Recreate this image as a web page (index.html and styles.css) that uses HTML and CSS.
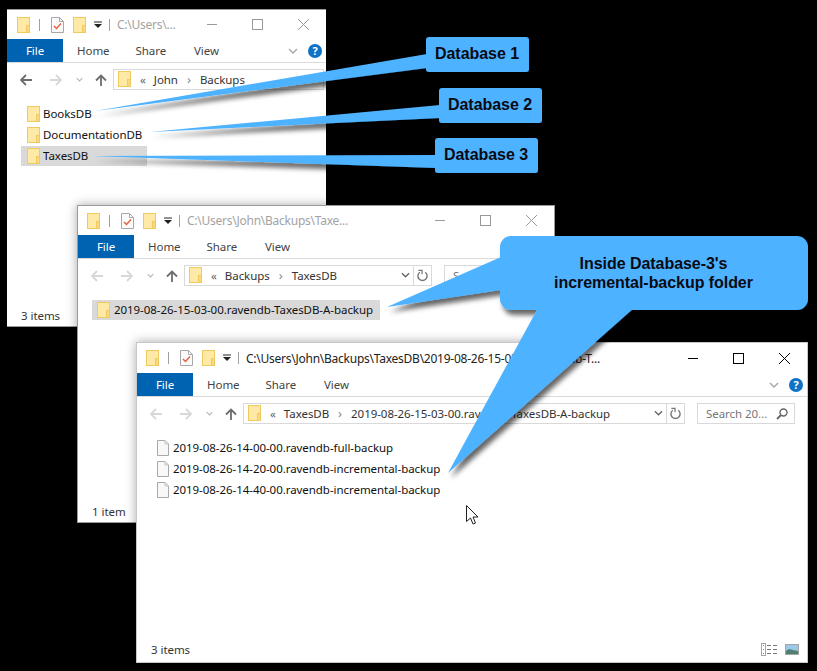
FILE: index.html
```html
<!DOCTYPE html>
<html lang="en">
<head>
    <meta charset="UTF-8">
    <title>RavenDB backup folders</title>
    <link rel="stylesheet" href="styles.css">
</head>
<body>
    <svg class="defs" width="0" height="0">
        <defs>
            <symbol id="folder" viewBox="0 0 13 16">
                <rect x="0.5" y="0.5" width="12" height="15" fill="#ffe9a6" stroke="#f0c95f"/>
                <rect x="9.5" y="8.5" width="3" height="7" fill="#f8d97f" stroke="#f0c95f"/>
            </symbol>
            <symbol id="check" viewBox="0 0 13 16">
                <path d="M.5.5h8l4 4v11H.5z" fill="#fafafa" stroke="#a8a8a8"/>
                <path d="M8.5.5v4h4" fill="none" stroke="#a8a8a8"/>
                <path d="M3 9l2.5 2.5L10 6.5" fill="none" stroke="#e2603a" stroke-width="1.4"/>
            </symbol>
            <symbol id="file" viewBox="0 0 12 16">
                <path d="M.5.5h7.500l3.500 3.500v11.500H.5z" fill="#f8f8f8" stroke="#a9a9a9"/>
                <path d="M8 .5v3.500h3.500" fill="none" stroke="#c4c4c4"/>
            </symbol>
            <symbol id="drop" viewBox="0 0 8 8">
                <path d="M0 1h8" stroke="#222" fill="none"/>
                <path d="M0 3h8L4 7z" fill="#222"/>
            </symbol>
            <symbol id="back" viewBox="0 0 12 12">
                <path d="M12 6H1.500M6 1L1 6l5 5" fill="none" stroke="currentColor" stroke-width="1.800"/>
            </symbol>
            <symbol id="forward" viewBox="0 0 12 12">
                <path d="M0 6h10.500M6 1l5 5-5 5" fill="none" stroke="currentColor" stroke-width="1.800"/>
            </symbol>
            <symbol id="up" viewBox="0 0 12 12">
                <path d="M6 12V1.500M1 6.500l5-5 5 5" fill="none" stroke="currentColor" stroke-width="1.800"/>
            </symbol>
            <symbol id="chev" viewBox="0 0 10 6">
                <path d="M1 1l4 4 4-4" fill="none" stroke="currentColor" stroke-width="1.500"/>
            </symbol>
            <symbol id="refresh" viewBox="0 0 12 14">
                <path d="M3 3.500a5 5 0 1 0 6 0" fill="none" stroke="#777" stroke-width="1.500"/>
                <path d="M1.500 1.500h4v4" fill="none" stroke="#777" stroke-width="1.300"/>
            </symbol>
        </defs>
    </svg>

    <!-- first explorer window -->
    <section class="win win-one">
        <div class="titlebar">
            <svg class="ico-folder"><use href="#folder"/></svg>
            <i class="tsep"></i>
            <svg class="ico-check"><use href="#check"/></svg>
            <svg class="ico-folder"><use href="#folder"/></svg>
            <svg class="ico-drop"><use href="#drop"/></svg>
            <i class="tsep"></i>
            <span class="title">C:\Users\...</span>
            <div class="controls">
                <span class="ctl-min"></span>
                <span class="ctl-max"></span>
                <span class="ctl-close"></span>
            </div>
        </div>
        <div class="ribbon">
            <span class="tab-file">File</span>
            <span class="tab">Home</span>
            <span class="tab">Share</span>
            <span class="tab">View</span>
            <svg class="rib-chev"><use href="#chev"/></svg>
            <span class="help">?</span>
        </div>
        <div class="nav">
            <svg class="nav-arrow dark"><use href="#back"/></svg>
            <svg class="nav-arrow light"><use href="#forward"/></svg>
            <svg class="nav-chev"><use href="#chev"/></svg>
            <svg class="nav-arrow dark"><use href="#up"/></svg>
            <div class="address">
                <svg class="ico-folder"><use href="#folder"/></svg>
                <span class="crumb-more">«</span>
                <span>John</span>
                <span class="crumb-sep">›</span>
                <span>Backups</span>
                <svg class="addr-chev"><use href="#chev"/></svg>
            </div>
        </div>
        <div class="list">
            <div class="row"><svg class="ico-folder"><use href="#folder"/></svg>BooksDB</div>
            <div class="row"><svg class="ico-folder"><use href="#folder"/></svg>DocumentationDB</div>
            <div class="row selected"><svg class="ico-folder"><use href="#folder"/></svg>TaxesDB</div>
        </div>
        <div class="status">3 items</div>
    </section>

    <!-- second window -->
    <section class="win win-two">
        <div class="titlebar">
            <svg class="ico-folder"><use href="#folder"/></svg>
            <i class="tsep"></i>
            <svg class="ico-check"><use href="#check"/></svg>
            <svg class="ico-folder"><use href="#folder"/></svg>
            <svg class="ico-drop"><use href="#drop"/></svg>
            <i class="tsep"></i>
            <span class="title">C:\Users\John\Backups\Taxe...</span>
            <div class="controls">
                <span class="ctl-min"></span>
                <span class="ctl-max"></span>
                <span class="ctl-close"></span>
            </div>
        </div>
        <div class="ribbon">
            <span class="tab-file">File</span>
            <span class="tab">Home</span>
            <span class="tab">Share</span>
            <span class="tab">View</span>
        </div>
        <div class="nav">
            <svg class="nav-arrow light"><use href="#back"/></svg>
            <svg class="nav-arrow light"><use href="#forward"/></svg>
            <svg class="nav-chev"><use href="#chev"/></svg>
            <svg class="nav-arrow dark"><use href="#up"/></svg>
            <div class="address">
                <svg class="ico-folder"><use href="#folder"/></svg>
                <span class="crumb-more">«</span>
                <span>Backups</span>
                <span class="crumb-sep">›</span>
                <span>TaxesDB</span>
                <svg class="addr-chev"><use href="#chev"/></svg>
                <span class="addr-refresh"><svg class="ico-refresh"><use href="#refresh"/></svg></span>
            </div>
            <div class="search"><span>S</span></div>
        </div>
        <div class="list">
            <div class="row selected"><svg class="ico-folder"><use href="#folder"/></svg>2019-08-26-15-03-00.ravendb-TaxesDB-A-backup</div>
        </div>
        <div class="status">1 item</div>
    </section>

    <!-- third window, the active one -->
    <section class="win win-three">
        <div class="titlebar">
            <svg class="ico-folder"><use href="#folder"/></svg>
            <i class="tsep"></i>
            <svg class="ico-check"><use href="#check"/></svg>
            <svg class="ico-folder"><use href="#folder"/></svg>
            <svg class="ico-drop"><use href="#drop"/></svg>
            <i class="tsep"></i>
            <span class="title">C:\Users\John\Backups\TaxesDB\2019-08-26-15-03-00.ravendb-T...</span>
            <div class="controls">
                <span class="ctl-min"></span>
                <span class="ctl-max"></span>
                <span class="ctl-close"></span>
            </div>
        </div>
        <div class="ribbon">
            <span class="tab-file">File</span>
            <span class="tab">Home</span>
            <span class="tab">Share</span>
            <span class="tab">View</span>
            <svg class="rib-chev"><use href="#chev"/></svg>
            <span class="help">?</span>
        </div>
        <div class="nav">
            <svg class="nav-arrow light"><use href="#back"/></svg>
            <svg class="nav-arrow light"><use href="#forward"/></svg>
            <svg class="nav-chev"><use href="#chev"/></svg>
            <svg class="nav-arrow dark"><use href="#up"/></svg>
            <div class="address">
                <svg class="ico-folder"><use href="#folder"/></svg>
                <span class="crumb-more">«</span>
                <span>TaxesDB</span>
                <span class="crumb-sep">›</span>
                <span>2019-08-26-15-03-00.ravendb-TaxesDB-A-backup</span>
                <svg class="addr-chev"><use href="#chev"/></svg>
                <span class="addr-refresh"><svg class="ico-refresh"><use href="#refresh"/></svg></span>
            </div>
            <div class="search">
                <span>Search 20...</span>
                <svg class="ico-search" viewBox="0 0 12 12">
                    <circle cx="7.500" cy="4.500" r="3.500" fill="none" stroke="#666" stroke-width="1.400"/>
                    <path d="M5 7l-4 4" stroke="#666" stroke-width="1.800"/>
                </svg>
            </div>
        </div>
        <div class="list">
            <div class="row"><svg class="ico-file"><use href="#file"/></svg>2019-08-26-14-00-00.ravendb-full-backup</div>
            <div class="row"><svg class="ico-file"><use href="#file"/></svg>2019-08-26-14-20-00.ravendb-incremental-backup</div>
            <div class="row"><svg class="ico-file"><use href="#file"/></svg>2019-08-26-14-40-00.ravendb-incremental-backup</div>
        </div>
        <div class="status">
            3 items
            <div class="views">
                <svg class="ico-details" viewBox="0 0 17 13">
                    <rect x="0.500" y="0.500" width="4" height="12" fill="#fff" stroke="#a5a5a5"/>
                    <path d="M2 2.500h1" stroke="#5a9a8a"/>
                    <path d="M2 6.500h1" stroke="#4aa8e8"/>
                    <path d="M2 10.500h1" stroke="#e05050"/>
                    <path d="M6 2.500h4M12 2.500h4M6 6.500h4M12 6.500h4M6 10.500h4M12 10.500h4" stroke="#777"/>
                </svg>
                <svg class="ico-preview" viewBox="0 0 14 11">
                    <rect x="0.500" y="0.500" width="13" height="10" fill="#9cc8ea" stroke="#a5a5a5"/>
                    <path d="M1 7l3-2 4 1 5 1v3H1z" fill="#4f7f6f"/>
                </svg>
            </div>
        </div>
    </section>

    <!-- callouts drawn on top of all the windows -->
    <svg class="callouts" width="817" height="671" viewBox="0 0 817 671">
        <defs>
            <filter id="soft" filterUnits="userSpaceOnUse" x="0" y="0" width="817" height="671">
                <feDropShadow dx="3" dy="5" stdDeviation="2.500" flood-color="#000" flood-opacity="0.6"/>
            </filter>
        </defs>
        <g fill="#4db2ff" filter="url(#soft)">
            <path d="M95 111L427 54V68z"/>
            <rect x="426" y="37" width="103" height="35" rx="3"/>
        </g>
        <g fill="#4db2ff" filter="url(#soft)">
            <path d="M150 132L440 105V118z"/>
            <rect x="439" y="88" width="103" height="35" rx="3"/>
        </g>
        <g fill="#4db2ff" filter="url(#soft)">
            <path d="M92 156L436 155V168z"/>
            <rect x="435" y="138" width="103" height="35" rx="3"/>
        </g>
        <g fill="#4db2ff" filter="url(#soft)">
            <path d="M387 307L501 257V290z"/>
            <path d="M448 473L538 308H634z"/>
            <rect x="500" y="236" width="308" height="74" rx="11"/>
        </g>
    </svg>
    <div class="label label-one">Database 1</div>
    <div class="label label-two">Database 2</div>
    <div class="label label-three">Database 3</div>
    <div class="label label-big">Inside Database-3's<br>incremental-backup folder</div>

    <svg class="pointer" viewBox="0 0 13 20">
        <path d="M.5.5v16l4-3.500 2.500 6 2.500-1-2.500-6h5z" fill="#fff" stroke="#222"/>
    </svg>
</body>
</html>
```

FILE: styles.css
```css
body {
    margin: 0;
    width: 817px;
    height: 671px;
    background: #000;
    overflow: hidden;
    position: relative;
    font-family: "Noto Sans", "Open Sans", sans-serif;
    font-size: 11.5px;
    letter-spacing: -0.05px;
    color: #111;
}
svg {
    display: block;
    flex: none;
}
.defs {
    position: absolute;
}

/* windows sit freely on the desktop */
.win {
    position: absolute;
    display: flex;
    flex-direction: column;
    box-sizing: border-box;
    background: #fff;
    border: 1px solid #9a9a9a;
    box-shadow: 0 0 10px rgba(0, 0, 0, 0.35);
    overflow: hidden;
}
.win-one {
    left: 7px;
    top: 9px;
    width: 319px;
    height: 318px;
    border-left: 0;
    border-right: 0;
}
.win-two {
    left: 77px;
    top: 205px;
    width: 478px;
    height: 318px;
}
.win-three {
    left: 136px;
    top: 342px;
    width: 672px;
    height: 321px;
    border-color: #c8c8c8;
}

.titlebar {
    display: flex;
    align-items: center;
    height: 29px;
    padding-left: 10px;
    flex: none;
}
.win-two .titlebar,
.win-three .titlebar {
    padding-left: 9px;
}
.win-three .titlebar {
    height: 30px;
}
.ico-folder {
    width: 13px;
    height: 16px;
}
.ico-check {
    width: 13px;
    height: 16px;
    margin-left: 11px;
    margin-right: 9px;
}
.ico-drop {
    width: 8px;
    height: 8px;
    margin-left: 8px;
}
.tsep {
    width: 1px;
    height: 12px;
    background: #a0a0a0;
    margin-left: 9px;
}
.ico-drop + .tsep {
    margin-left: 7px;
}
.title {
    margin-left: 7px;
    color: #a3a3a3;
    white-space: nowrap;
    font-size: 12px;
    letter-spacing: -0.25px;
}
.win-three .title {
    color: #222;
}
.controls {
    display: flex;
    align-items: center;
    gap: 35px;
    margin-left: auto;
    margin-right: 17px;
    flex: none;
}
.ctl-min {
    width: 10px;
    height: 1px;
    background: #999;
}
.ctl-max {
    width: 9px;
    height: 9px;
    border: 1px solid #999;
}
.ctl-close {
    width: 11px;
    height: 11px;
    background:
        linear-gradient(45deg, transparent 47%, #999 47%, #999 53%, transparent 53%),
        linear-gradient(-45deg, transparent 47%, #999 47%, #999 53%, transparent 53%);
}
.win-three .ctl-min {
    background: #000;
}
.win-three .ctl-max {
    border-color: #000;
}
.win-three .ctl-close {
    background:
        linear-gradient(45deg, transparent 46%, #000 46%, #000 54%, transparent 54%),
        linear-gradient(-45deg, transparent 46%, #000 46%, #000 54%, transparent 54%);
}

.ribbon {
    display: flex;
    align-items: center;
    height: 23px;
    border-bottom: 1px solid #dadada;
    flex: none;
}
.tab-file {
    width: 56px;
    height: 23px;
    line-height: 23px;
    text-align: center;
    background: #0063b1;
    color: #fff;
    margin-right: 14px;
}
.tab {
    width: 58.5px;
    color: #444;
}
.rib-chev {
    width: 10px;
    height: 6px;
    color: #aaa;
    margin-left: auto;
}
.help {
    width: 14px;
    height: 14px;
    line-height: 14px;
    margin: 0 4px 0 10px;
    border-radius: 50%;
    background: #0e72c6;
    color: #fff;
    font-weight: 700;
    font-size: 11px;
    text-align: center;
}

.nav {
    display: flex;
    align-items: center;
    height: 21px;
    margin-top: 6px;
    padding-left: 13px;
    flex: none;
}
.nav-arrow {
    width: 12px;
    height: 12px;
    margin-right: 18px;
}
.nav-arrow.dark {
    color: #6d6d6d;
}
.nav-arrow.light {
    color: #d8d8d8;
}
.nav-chev {
    width: 7px;
    height: 5px;
    color: #b5b5b5;
    margin: 0 12px 0 -4px;
}
.nav-chev + .nav-arrow {
    margin-right: 6px;
}
.address {
    display: flex;
    align-items: center;
    flex: 1;
    min-width: 0;
    height: 21px;
    box-sizing: border-box;
    border: 1px solid #d9d9d9;
    padding-left: 4px;
    padding-bottom: 1px;
    gap: 9px;
    color: #333;
    white-space: nowrap;
}
.crumb-more {
    color: #666;
    margin-right: -1px;
}
.crumb-sep {
    color: #888;
    font-size: 13px;
}
.addr-chev {
    width: 9px;
    height: 6px;
    margin-left: auto;
    margin-right: 3px;
    color: #666;
}
.addr-refresh {
    display: flex;
    align-items: center;
    justify-content: center;
    width: 17px;
    height: 19px;
    margin-left: -9px;
    border-left: 1px solid #d9d9d9;
}
.ico-refresh {
    width: 11px;
    height: 13px;
}
.win-one .address {
    margin-right: 2px;
}
.win-two .address {
    flex: none;
    width: 248px;
}
.win-three .address {
    flex: none;
    width: 442px;
}
.search {
    display: flex;
    align-items: center;
    box-sizing: border-box;
    height: 21px;
    border: 1px solid #d9d9d9;
    margin-left: 12px;
    padding: 0 6px 0 8px;
    color: #777;
}
.win-two .search {
    width: 100px;
}
.win-three .search {
    width: 98px;
}
.ico-search {
    width: 12px;
    height: 12px;
    margin-left: auto;
}

.list {
    display: flex;
    flex-direction: column;
    align-items: flex-start;
    margin-top: 14px;
    padding-left: 14px;
    flex: 1;
}
.row {
    display: flex;
    align-items: center;
    gap: 3px;
    height: 21px;
    padding: 0 6px 2px;
    box-sizing: border-box;
    color: #111;
    white-space: nowrap;
}
.selected {
    background: #d9d9d9;
    height: 20px;
    padding-bottom: 1px;
}
.win-one .row {
    width: 126px;
}
.win-two .row {
    width: 288px;
    padding-left: 5px;
    gap: 4px;
}
.win-three .row {
    gap: 4px;
}
.ico-file {
    width: 12px;
    height: 16px;
}
.status {
    display: flex;
    align-items: center;
    height: 20px;
    margin: 0 0 1px 14px;
    color: #333;
    flex: none;
}
.win-three .status {
    margin-bottom: 3px;
}
.views {
    display: flex;
    align-items: center;
    gap: 7px;
    margin-left: auto;
    margin-right: 8px;
}
.ico-details {
    width: 17px;
    height: 13px;
}
.ico-preview {
    width: 14px;
    height: 11px;
}

.callouts {
    position: absolute;
    left: 0;
    top: 0;
}
.label {
    position: absolute;
    display: flex;
    align-items: center;
    justify-content: center;
    text-align: center;
    font-family: "Liberation Sans", sans-serif;
    font-weight: 700;
    font-size: 16px;
    letter-spacing: -0.05px;
    color: #0a0a14;
}
.label-one {
    left: 426px;
    top: 37px;
    width: 102px;
    height: 33px;
}
.label-two {
    left: 439px;
    top: 88px;
    width: 102px;
    height: 33px;
}
.label-three {
    left: 435px;
    top: 138px;
    width: 102px;
    height: 33px;
}
.label-big {
    left: 500px;
    top: 236px;
    width: 307px;
    height: 74px;
    line-height: 19px;
}
.pointer {
    position: absolute;
    left: 466px;
    top: 505px;
    width: 13px;
    height: 20px;
}
```
